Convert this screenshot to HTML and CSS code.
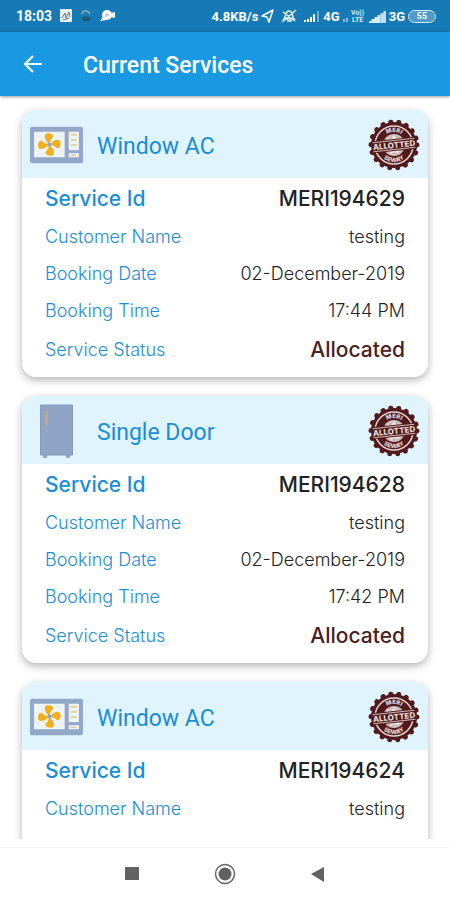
FILE: index.html
```html
<!DOCTYPE html>
<html lang="en">
<head>
    <meta charset="UTF-8">
    <meta name="viewport" content="width=device-width, initial-scale=1.0">
    <title>Current Services</title>
    <link rel="stylesheet" href="styles.css">
</head>
<body>
    <!-- shared icons -->
    <svg class="sprite" aria-hidden="true">
        <symbol id="window-ac" viewBox="0 0 52 36">
            <rect width="52" height="36" rx="2" fill="#93a7c9"/>
            <rect x="4" y="5" width="30" height="25" fill="#edf5fb"/>
            <g fill="#f2b01e">
                <path id="blade" d="M18 16C14 13 13 7 17 6.500C22 6 24 9 22 11C20 13 20 14 19.500 16Z"/>
                <use href="#blade" transform="rotate(90 19 17.500)"/>
                <use href="#blade" transform="rotate(180 19 17.500)"/>
                <use href="#blade" transform="rotate(270 19 17.500)"/>
            </g>
            <circle cx="19" cy="17.500" r="2" fill="#8fa5c8"/>
            <rect x="38" y="5" width="10" height="18" fill="#edf5fb"/>
            <path d="M40 8h6M40 13h6M40 18h6" stroke="#e5c982" stroke-width="1.500"/>
            <rect x="38" y="26" width="10" height="4" fill="#edf5fb"/>
            <path d="M40 28h5" stroke="#e5c982" stroke-width="1.500"/>
        </symbol>
        <symbol id="fridge" viewBox="0 0 34 54">
            <path d="M1 1h32v50h-2l-1 3h-3l-1-3H8l-1 3H4l-1-3H1z" fill="#90a5c6"/>
            <path d="M1 1h32v50H1z" fill="none" stroke="#8499bd"/>
            <path d="M7 7v15" stroke="#c5ab80" stroke-width="2"/>
        </symbol>
    </svg>

    <div class="status-bar">
        <span class="clock">18:03</span>
        <svg class="status-left" width="56" height="14" viewBox="0 0 56 14" aria-hidden="true">
            <rect width="12" height="13" rx="1" fill="#e9f1f5"/>
            <path d="M2 9l3-5 1 5 3-6 1 5M3 11l6-2" stroke="#617985" fill="none"/>
            <path d="M22 5c1-4 6-4 8 0" stroke="#90a9ad" stroke-width="1.500" fill="none"/>
            <path d="M22 9c2-2 6-2 9 1l-2 2h-5z" fill="#22577a"/>
            <circle cx="47" cy="6" r="5" fill="#fff"/>
            <path d="M43 8l-3 4 6-1zM51 4l4-1v6l-4-1z" fill="#fff"/>
            <path d="M45 6h4M47 4v4" stroke="#9bb9ce"/>
        </svg>
        <div class="status-right">
            <span>4.8KB/s</span>
            <svg width="13" height="14" viewBox="0 0 13 14" aria-hidden="true">
                <path d="M1 7L12 1 8 13 6 8z" fill="none" stroke="#fff" stroke-width="1.500" stroke-linejoin="round"/>
            </svg>
            <svg class="muted" width="16" height="14" viewBox="0 0 16 14" aria-hidden="true">
                <path d="M3 10c2-2 1-8 5-8s3 6 5 8zM6 12h5M2 3l12 9M1 13L15 1" fill="none" stroke="#e6f2f9" stroke-width="1.500"/>
            </svg>
            <svg width="16" height="12" viewBox="0 0 16 12" aria-hidden="true">
                <path d="M1 12v-2M4 12V9M7 12V7M10 12V4" stroke="#fff" stroke-width="2"/>
                <path d="M14 12V1" stroke="#71aed4" stroke-width="2"/>
            </svg>
            <span>4G</span>
            <svg class="data" width="5" height="5" viewBox="0 0 5 5" aria-hidden="true">
                <path d="M1 5V2M4 5V1" stroke="#b8d6e8" stroke-width="1.500"/>
            </svg>
            <svg class="volte" width="15" height="14" viewBox="0 0 15 14" aria-hidden="true">
                <text x="0" y="6">Vo))</text>
                <text x="1" y="13">LTE</text>
            </svg>
            <svg width="17" height="13" viewBox="0 0 17 13" aria-hidden="true">
                <path d="M1 13v-2M4 13v-4M7 13V7M10 13V5" stroke="#d8ebf6" stroke-width="3"/>
                <path d="M13 13V3M16 13V1" stroke="#c1deef" stroke-width="3"/>
            </svg>
            <span>3G</span>
            <span class="battery">55</span>
        </div>
    </div>

    <header class="app-bar">
        <button class="back-button" aria-label="Back">
            <svg width="20" height="20" viewBox="0 0 20 20">
                <path d="M19 10H2M10 2L2 10l8 8" fill="none" stroke="#fff" stroke-width="2"/>
            </svg>
        </button>
        <h1>Current Services</h1>
    </header>

    <main class="service-list">
        <article class="card">
            <div class="card-header">
                <svg class="product-icon"><use href="#window-ac"/></svg>
                <h2>Window AC</h2>
                <svg class="stamp" viewBox="0 0 52 52">
                    <g id="stamp">
                        <circle cx="26" cy="26" r="23" fill="#521a1b"/>
                        <circle cx="26" cy="26" r="23" fill="none" stroke="#521a1b" stroke-width="5" stroke-linecap="round" stroke-dasharray="0.100 7.928"/>
                        <circle cx="26" cy="26" r="19" fill="none" stroke="#e3d8d8" stroke-width="1.500"/>
                        <circle cx="26" cy="26" r="11" fill="#cdbdbb"/>
                        <path d="M18 18l5 3 3-5 3 5 5-2-2 4H20zM20 31h13l-3 3-4-1-3 2z" fill="#efe8e6"/>
                        <path id="arc-top" d="M13 26a13 13 0 0 1 26 0" fill="none"/>
                        <path id="arc-bottom" d="M9 26a17 17 0 0 0 34 0" fill="none"/>
                        <text class="stamp-ring"><textPath href="#arc-top" startOffset="50%">MERI</textPath></text>
                        <text class="stamp-ring"><textPath href="#arc-bottom" startOffset="50%">SEWAY</textPath></text>
                        <g transform="rotate(-6 26 26)">
                            <path d="M4 20h44v12H4z" fill="#521a1b"/>
                            <path d="M5 21.500h42M5 30.500h42" stroke="#cbb9b8"/>
                            <text class="stamp-band" x="26" y="29">ALLOTTED</text>
                        </g>
                    </g>
                </svg>
            </div>
            <dl class="details">
                <div class="row service-id"><dt>Service Id</dt><dd>MERI194629</dd></div>
                <div class="row"><dt>Customer Name</dt><dd>testing</dd></div>
                <div class="row"><dt>Booking Date</dt><dd>02-December-2019</dd></div>
                <div class="row"><dt>Booking Time</dt><dd>17:44 PM</dd></div>
                <div class="row status"><dt>Service Status</dt><dd>Allocated</dd></div>
            </dl>
        </article>

        <article class="card">
            <div class="card-header">
                <svg class="product-icon"><use href="#fridge"/></svg>
                <h2>Single Door</h2>
                <svg class="stamp" viewBox="0 0 52 52"><use href="#stamp"/></svg>
            </div>
            <dl class="details">
                <div class="row service-id"><dt>Service Id</dt><dd>MERI194628</dd></div>
                <div class="row"><dt>Customer Name</dt><dd>testing</dd></div>
                <div class="row"><dt>Booking Date</dt><dd>02-December-2019</dd></div>
                <div class="row"><dt>Booking Time</dt><dd>17:42 PM</dd></div>
                <div class="row status"><dt>Service Status</dt><dd>Allocated</dd></div>
            </dl>
        </article>

        <article class="card">
            <div class="card-header">
                <svg class="product-icon"><use href="#window-ac"/></svg>
                <h2>Window AC</h2>
                <svg class="stamp" viewBox="0 0 52 52"><use href="#stamp"/></svg>
            </div>
            <dl class="details">
                <div class="row service-id"><dt>Service Id</dt><dd>MERI194624</dd></div>
                <div class="row"><dt>Customer Name</dt><dd>testing</dd></div>
            </dl>
        </article>
    </main>

    <nav class="nav-bar">
        <button aria-label="Recent apps">
            <svg width="22" height="22" viewBox="0 0 22 22"><path d="M4 4h14v13H4z" fill="#626262"/></svg>
        </button>
        <button aria-label="Home">
            <svg width="22" height="22" viewBox="0 0 22 22">
                <circle cx="11" cy="11" r="9.500" fill="none" stroke="#666" stroke-width="1.500"/>
                <circle cx="11" cy="11" r="6.500" fill="#626262"/>
            </svg>
        </button>
        <button aria-label="Back">
            <svg width="22" height="22" viewBox="0 0 22 22"><path d="M17 4v15L4 11z" fill="#626262"/></svg>
        </button>
    </nav>
</body>
</html>
```
FILE: styles.css
```css
* {
    box-sizing: border-box;
}
body {
    font-family: Inter, Roboto, sans-serif;
    background-color: #fff;
    margin: 0;
    height: 100vh;
    display: flex;
    flex-direction: column;
    overflow: hidden;
}
h1, h2, dl, dd {
    margin: 0;
}
button {
    display: flex;
    align-items: center;
    justify-content: center;
    padding: 0;
    border: none;
    background: none;
    cursor: pointer;
}
svg {
    flex-shrink: 0;
}
.sprite {
    position: absolute;
    width: 0;
    height: 0;
}
.status-bar {
    display: flex;
    align-items: center;
    flex-shrink: 0;
    height: 32px;
    padding: 0 14px 0 16px;
    background-color: #157ab5;
    color: #fff;
    font-family: Roboto, sans-serif;
    font-size: 13px;
    font-weight: 700;
}
.clock {
    font-size: 14px;
}
.status-left {
    margin-left: 8px;
}
.status-right {
    display: flex;
    align-items: center;
    gap: 3px;
    margin-left: auto;
}
.muted {
    margin: 0 4px;
}
.data {
    margin-top: 7px;
}
.volte text {
    font-size: 7px;
    fill: #d8ebf6;
}
.battery {
    width: 28px;
    height: 13px;
    border: 1px solid #d8ebf6;
    border-radius: 7px;
    background-color: #4d9ccb;
    font-size: 9px;
    line-height: 11px;
    text-align: center;
}
.app-bar {
    display: flex;
    align-items: center;
    flex-shrink: 0;
    height: 64px;
    padding: 0 23px;
    background-color: #1a99e3;
    color: #fff;
    box-shadow: 0 1px 3px rgba(0, 0, 0, 0.4);
    z-index: 1;
}
.app-bar h1 {
    margin-left: 40px;
    padding-top: 2px;
    font-family: Roboto, sans-serif;
    font-size: 23px;
    font-weight: 500;
}
.service-list {
    flex: 1;
    min-height: 0;
    overflow: hidden;
    padding: 14px 22px 0;
    margin-bottom: 8px;
}
.card {
    min-height: 267px;
    margin-bottom: 19px;
    border-radius: 14px;
    background-color: #fff;
    box-shadow: 0 3px 8px rgba(0, 0, 0, 0.3);
    overflow: hidden;
}
.card-header {
    display: flex;
    align-items: center;
    height: 68px;
    padding: 2px 8px 0;
    background-color: #e0f4fe;
}
.product-icon {
    width: 53px;
    height: 54px;
}
.card-header h2 {
    flex: 1;
    margin-left: 14px;
    padding-top: 2px;
    color: #1a8dd9;
    font-family: Roboto, sans-serif;
    font-size: 23px;
    font-weight: 400;
}
.stamp {
    width: 52px;
    height: 52px;
}
.stamp-ring {
    fill: #e3d8d8;
    font-size: 6px;
    font-weight: 800;
    text-anchor: middle;
}
.stamp-band {
    fill: #e3d8d8;
    font-size: 8px;
    font-weight: 800;
    text-anchor: middle;
}
.details {
    padding: 0 23px 8px;
}
.row {
    display: flex;
    align-items: center;
    justify-content: space-between;
    height: 37px;
    font-size: 18px;
    font-weight: 300;
}
.row dt {
    color: #1a8dd9;
}
.row dd {
    color: #222;
}
.service-id, .status {
    height: 40px;
}
.service-id dt, .service-id dd, .status dd {
    font-size: 21px;
    font-weight: 500;
}
.status dd {
    color: #4a2022;
}
.nav-bar {
    display: flex;
    align-items: center;
    justify-content: center;
    gap: 71px;
    flex-shrink: 0;
    height: 53px;
    border-top: 1px solid #f5f5f5;
}
```
